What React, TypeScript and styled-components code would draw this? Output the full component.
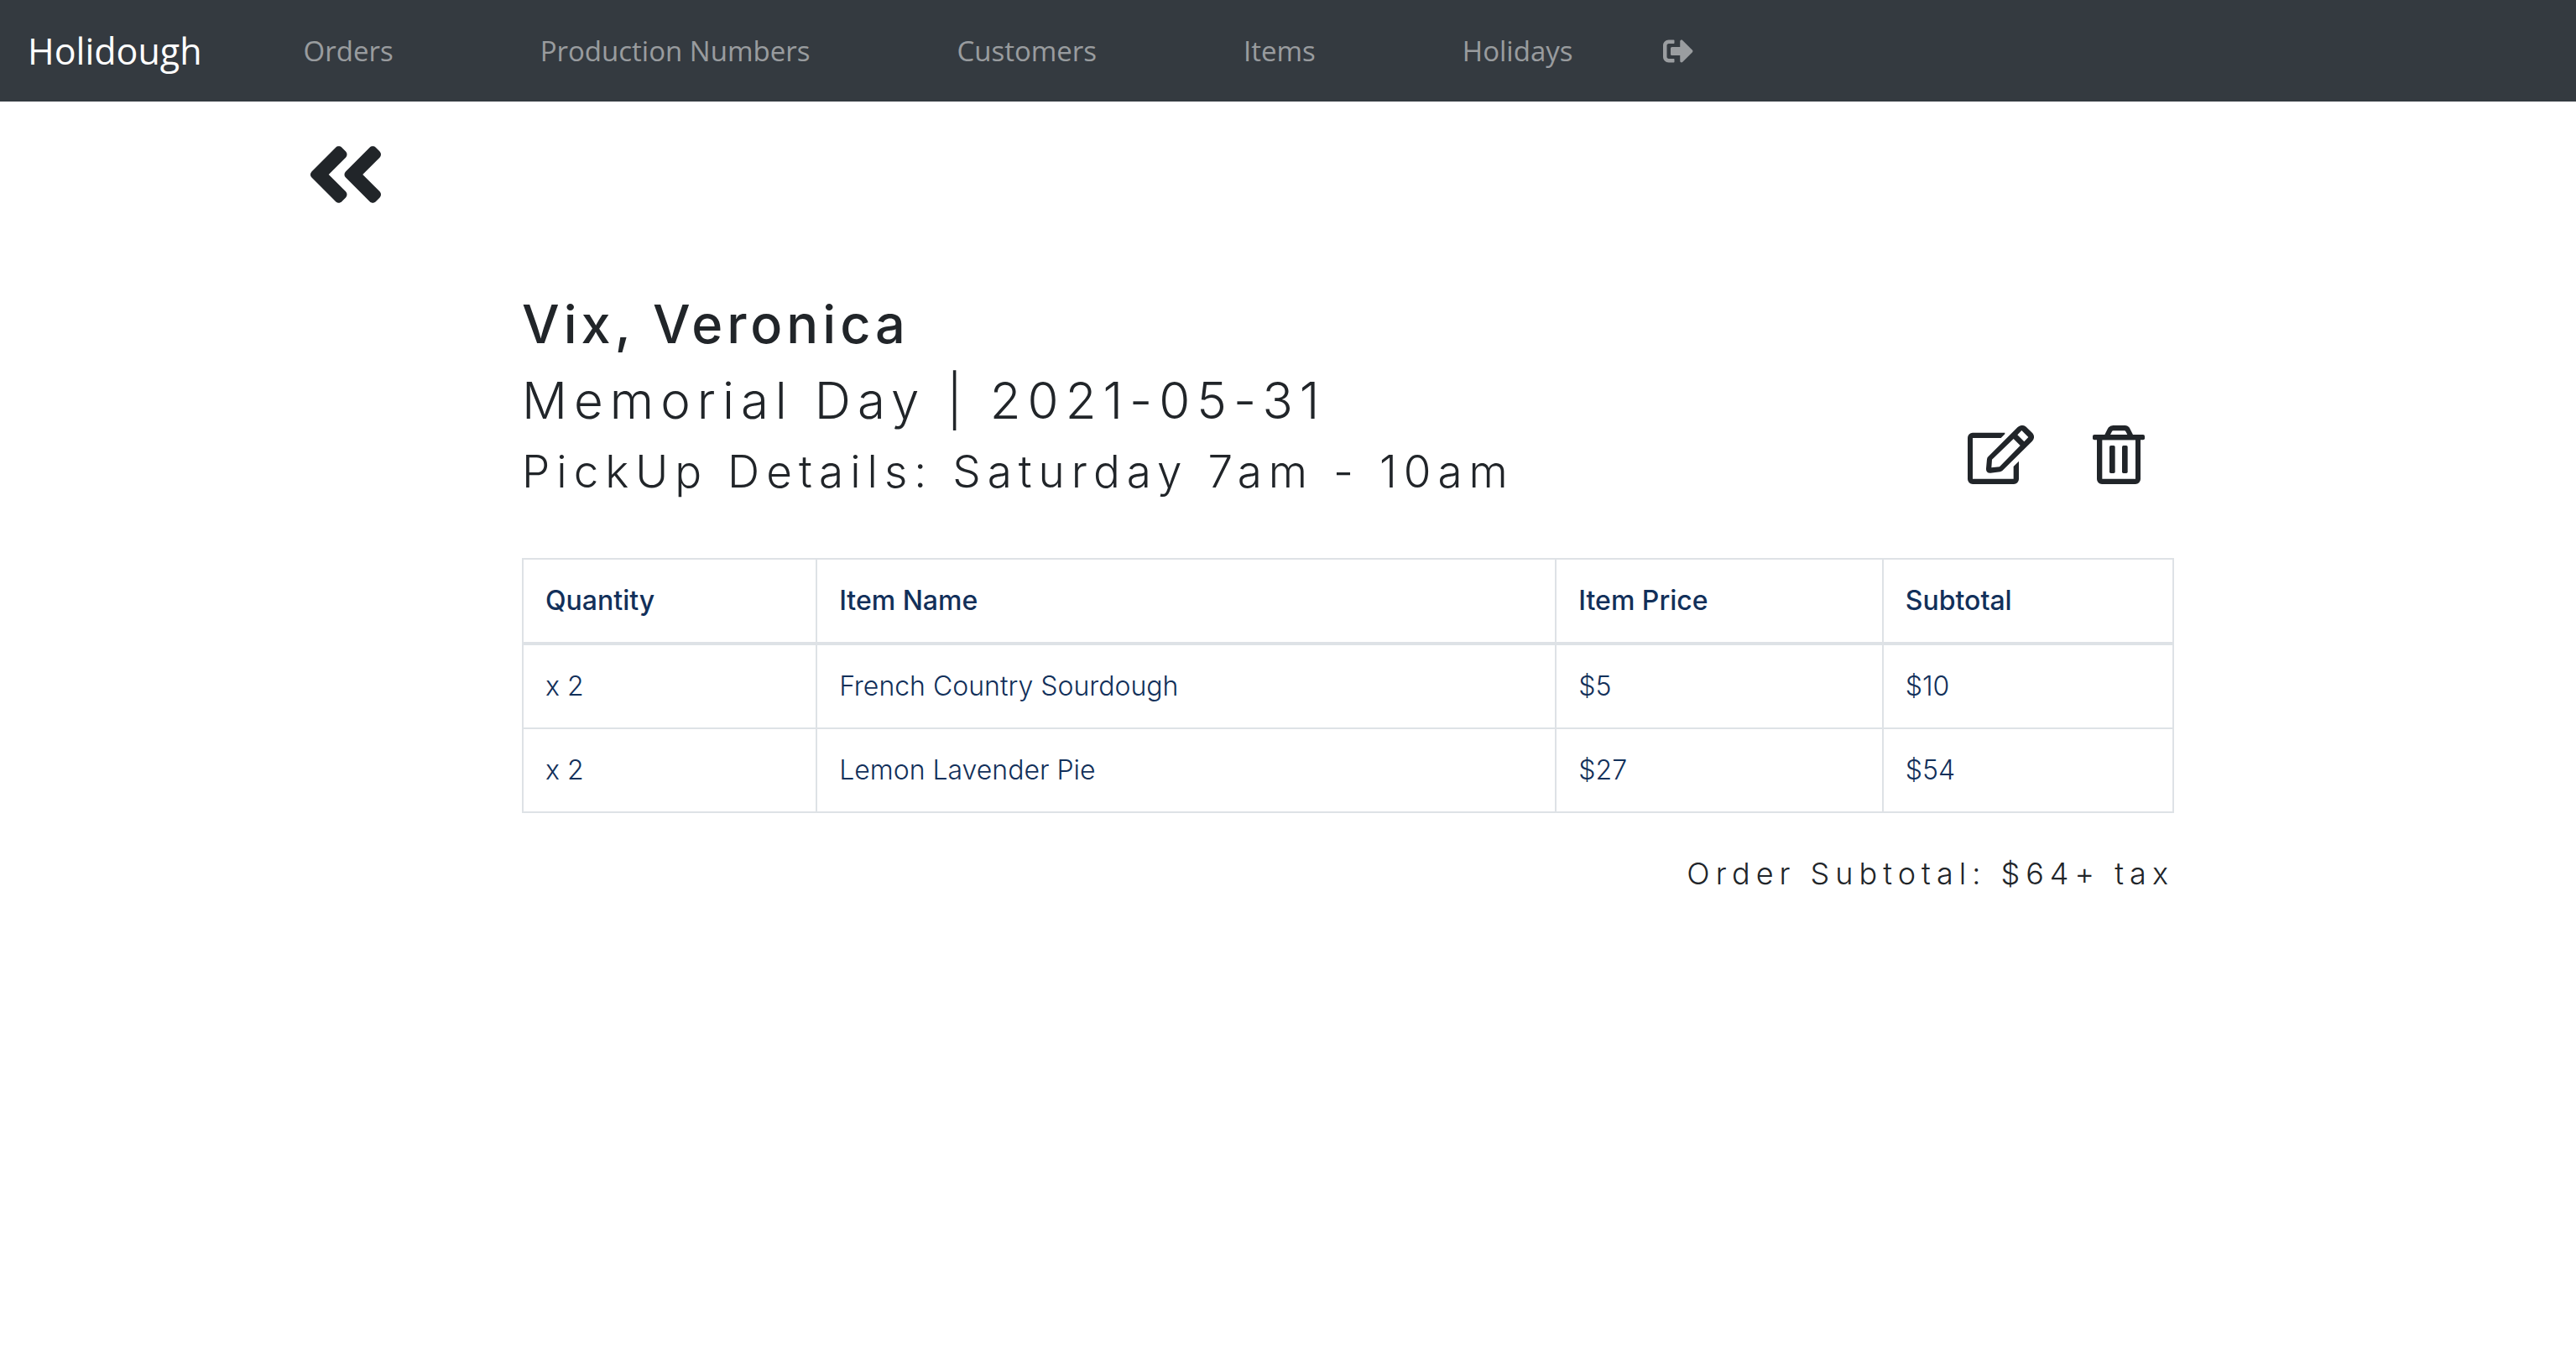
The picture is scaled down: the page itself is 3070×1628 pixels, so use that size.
import React from "react";
import styled, { createGlobalStyle } from "styled-components";
import { FaAngleDoubleLeft, FaSignOutAlt } from "react-icons/fa";

const GlobalStyle = createGlobalStyle`
  *, *::before, *::after { box-sizing: border-box; }
  body {
    margin: 0;
    background: #fff;
    color: #212529;
    font-family: Inter, "Open Sans", sans-serif;
  }
`;

const NavBar = styled.nav`
  display: flex;
  align-items: center;
  height: 121px;
  padding: 0 33px;
  background: #343a40;
  font-family: "Open Sans", "Noto Sans", sans-serif;
`;

const Brand = styled.a`
  margin-right: 121px;
  color: #fff;
  font-size: 43px;
  line-height: 60px;
  text-decoration: none;
`;

const NavList = styled.ul`
  display: flex;
  align-items: center;
  gap: 175px;
  margin: 0;
  padding: 0;
  list-style: none;
`;

const NavLink = styled.a`
  color: rgba(255, 255, 255, 0.5);
  font-size: 33px;
  line-height: 48px;
  text-decoration: none;
`;

const IconButton = styled.button`
  display: block;
  margin: 0;
  padding: 0;
  border: 0;
  background: none;
  color: inherit;
  line-height: 0;
  cursor: pointer;
`;

const SignOutButton = styled(IconButton)`
  margin-left: 107px;
  color: rgba(255, 255, 255, 0.5);
  font-size: 36px;
`;

const BackRow = styled.div`
  padding: 33px 358px 78px;
`;

const BackButton = styled(IconButton)`
  font-size: 108px;
`;

const Page = styled.main`
  display: grid;
  grid-template-columns: minmax(0, 622fr) minmax(0, 1969fr) minmax(0, 479fr);
`;

const Order = styled.section`
  grid-column: 2;
`;

const OrderHeader = styled.header`
  display: flex;
  justify-content: space-between;
  align-items: flex-end;
  margin-bottom: 63px;
`;

const Customer = styled.h1`
  margin: 0;
  font-size: 63px;
  font-weight: 500;
  line-height: 92px;
  letter-spacing: 5px;
`;

const Holiday = styled.h2`
  margin: 0;
  font-size: 60px;
  font-weight: 300;
  line-height: 90px;
  letter-spacing: 8px;
`;

const Pickup = styled.h3`
  margin: 0;
  font-size: 53px;
  font-weight: 300;
  line-height: 80px;
  letter-spacing: 8px;
`;

const Actions = styled.div`
  display: flex;
  gap: 70px;
  padding: 0 35px 25px 0;
`;

const ItemTable = styled.table`
  width: 100%;
  table-layout: fixed;
  border-collapse: collapse;
  color: #12305a;
  font-size: 32px;
  line-height: 46px;
`;

const Column = styled.col<{ $share: number }>`
  width: ${(p) => p.$share}%;
`;

const HeadCell = styled.th`
  padding: 26px;
  border: 2px solid #dee2e6;
  border-bottom-width: 4px;
  font-weight: 500;
  text-align: left;
`;

const Cell = styled.td`
  padding: 26px;
  border: 2px solid #dee2e6;
  font-weight: 300;
`;

const Total = styled.p`
  margin: 45px 0 0;
  font-size: 36px;
  font-weight: 300;
  line-height: 54px;
  letter-spacing: 7px;
  text-align: right;
`;

const EditIcon = () => (
  <svg width="79" height="70" viewBox="30 20 237 210" fill="currentColor" fillRule="evenodd" aria-hidden="true">
    <path d="M163 46H48A18 18 0 0 0 30 64V212A18 18 0 0 0 48 230H195A18 18 0 0 0 213 212V148L194 167V211H48V65H149L163 51Z" />
    <path d="M209 26Q224 14 239 25L262 48Q273 62 261 76L154 182Q150 185 146 186L112 190Q95 191 96 174L99 141Q100 134 104 131ZM117 142L115 171L144 168L218 92L194 68ZM208 54L232 78L247 62L223 38Z" />
  </svg>
);

const TrashIcon = () => (
  <svg width="62" height="70" viewBox="30 20 186 210" fill="currentColor" fillRule="evenodd" aria-hidden="true">
    <rect x="30" y="53" width="186" height="19" rx="6" />
    <path d="M72 55L84 31Q91 20 103 20H145Q157 20 163 31L175 55ZM92 55H155L149 43Q147 39 143 39H104Q100 39 98 43Z" />
    <path d="M45 62H201V212A18 18 0 0 1 183 230H63A18 18 0 0 1 45 212ZM64 72V211H183V72Z" />
    <rect x="90" y="92" width="20" height="99" rx="5" />
    <rect x="135" y="92" width="20" height="99" rx="5" />
  </svg>
);

const links = ["Orders", "Production Numbers", "Customers", "Items", "Holidays"];

const items = [
  { quantity: 2, name: "French Country Sourdough", price: 5 },
  { quantity: 2, name: "Lemon Lavender Pie", price: 27 },
];

export default function App() {
  const subtotal = items.reduce((sum, i) => sum + i.quantity * i.price, 0);
  return (
    <>
      <GlobalStyle />
      <NavBar>
        <Brand href="#">Holidough</Brand>
        <NavList>
          {links.map((label) => (
            <li key={label}>
              <NavLink href="#">{label}</NavLink>
            </li>
          ))}
        </NavList>
        <SignOutButton aria-label="Sign out">
          <FaSignOutAlt />
        </SignOutButton>
      </NavBar>
      <BackRow>
        <BackButton aria-label="Back to orders">
          <FaAngleDoubleLeft />
        </BackButton>
      </BackRow>
      <Page>
        <Order>
          <OrderHeader>
            <div>
              <Customer>Vix, Veronica</Customer>
              <Holiday>Memorial Day | 2021-05-31</Holiday>
              <Pickup>PickUp Details: Saturday 7am - 10am</Pickup>
            </div>
            <Actions>
              <IconButton aria-label="Edit order">
                <EditIcon />
              </IconButton>
              <IconButton aria-label="Delete order">
                <TrashIcon />
              </IconButton>
            </Actions>
          </OrderHeader>
          <ItemTable>
            <colgroup>
              <Column $share={17.8} />
              <Column $share={44.8} />
              <Column $share={19.8} />
              <Column $share={17.6} />
            </colgroup>
            <thead>
              <tr>
                <HeadCell scope="col">Quantity</HeadCell>
                <HeadCell scope="col">Item Name</HeadCell>
                <HeadCell scope="col">Item Price</HeadCell>
                <HeadCell scope="col">Subtotal</HeadCell>
              </tr>
            </thead>
            <tbody>
              {items.map((item) => (
                <tr key={item.name}>
                  <Cell>x {item.quantity}</Cell>
                  <Cell>{item.name}</Cell>
                  <Cell>${item.price}</Cell>
                  <Cell>${item.quantity * item.price}</Cell>
                </tr>
              ))}
            </tbody>
          </ItemTable>
          <Total>Order Subtotal: ${subtotal}+ tax</Total>
        </Order>
      </Page>
    </>
  );
}
